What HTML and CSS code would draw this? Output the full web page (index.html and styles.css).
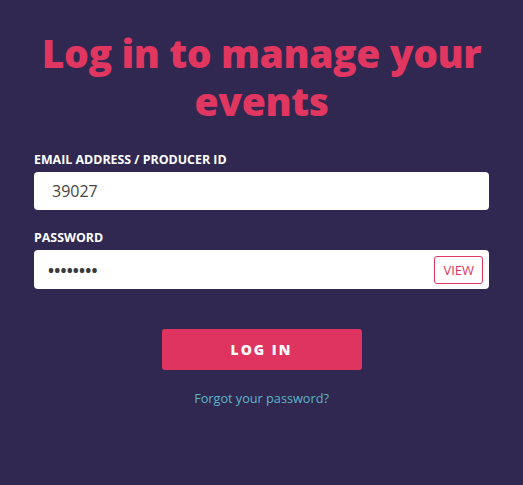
FILE: index.html
```html
<!DOCTYPE html>
<html>
<head>
<meta charset="utf-8">
<link rel="stylesheet" href="styles.css">
</head>
<body>
<main class="login">
  <h1 class="title">Log in to manage your events</h1>
  <form class="form">
    <div class="field">
      <label class="label">EMAIL ADDRESS / PRODUCER ID</label>
      <div class="input"><span class="value">39027</span></div>
    </div>
    <div class="field">
      <label class="label">PASSWORD</label>
      <div class="input input-pw"><span class="dots">••••••••</span><span class="view">VIEW</span></div>
    </div>
    <div class="actions">
      <button type="button" class="btn">LOG IN</button>
      <a class="forgot">Forgot your password?</a>
    </div>
  </form>
</main>
</body>
</html>
```
FILE: styles.css
```css
html, body { margin: 0; padding: 0; }
body {
  background: #302851;
  font-family: "Open Sans", "Noto Sans", sans-serif;
  width: 523px;
  height: 485px;
  overflow: hidden;
}
.login {
  padding: 29px 34px 0;
}
.title {
  margin: 0;
  color: #e0365f;
  font-weight: 800;
  font-size: 39px;
  line-height: 48px;
  text-align: center;
  letter-spacing: -0.4px;
}
.form {
  margin-top: 27px;
  display: flex;
  flex-direction: column;
}
.field { display: flex; flex-direction: column; margin-bottom: 20px; }
.label {
  color: #fff;
  font-weight: 700;
  font-size: 12.4px;
  line-height: 16px;
  margin-bottom: 4px;
}
.input {
  height: 38px;
  background: #fff;
  border-radius: 4px;
  display: flex;
  align-items: center;
  padding: 0 6px 0 18px;
}
.value { color: #444; font-size: 16px; }
.input-pw { padding-left: 14px; justify-content: space-between; height: 39px; }
.dots { color: #3a3a3a; font-size: 16px; font-weight: 700; letter-spacing: 0.2px; }
.view {
  border: 1px solid #e0365f;
  border-radius: 3px;
  color: #e0365f;
  font-size: 13px;
  line-height: 26px;
  padding: 0 8px;
}
.actions {
  display: flex;
  flex-direction: column;
  align-items: center;
  margin-top: 20px;
}
.btn {
  width: 200px;
  height: 41px;
  background: #e03460;
  border: none;
  border-radius: 3px;
  color: #fff;
  font-family: "Open Sans", sans-serif;
  font-weight: 800;
  font-size: 14px;
  letter-spacing: 2px;
}
.forgot {
  margin-top: 19px;
  color: #5db4c9;
  font-size: 12.7px;
}
```
